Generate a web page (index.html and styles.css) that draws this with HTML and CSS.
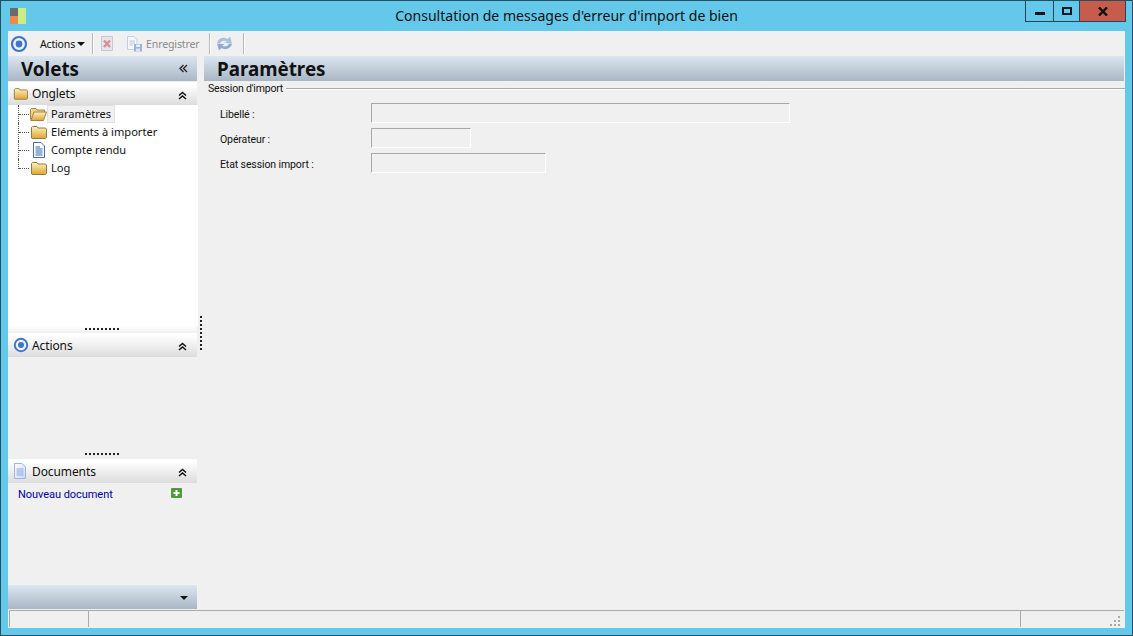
FILE: index.html
```html
<!DOCTYPE html>
<html lang="fr">
<head>
<meta charset="utf-8">
<title>Consultation de messages d'erreur d'import de bien</title>
<link rel="stylesheet" href="styles.css">
</head>
<body>
<svg class="defs" width="0" height="0">
  <defs>
    <linearGradient id="fold" x1="0" y1="0" x2="0" y2="1"><stop offset="0" stop-color="#fdf3c0"/><stop offset="1" stop-color="#e0a52e"/></linearGradient>
    <linearGradient id="page" x1="0" y1="0" x2="1" y2="1"><stop offset="0" stop-color="#ffffff"/><stop offset="1" stop-color="#c9d9f2"/></linearGradient>
    <symbol id="folder" viewBox="0 0 17 14"><path d="M1.500 13V2.500L2.500 1.500H7L8 3H15.500L16.500 4V12.500L15.500 13.500H2Z" fill="url(#fold)" stroke="#8a7a50"/></symbol>
    <symbol id="folder-open" viewBox="0 0 17 14"><path d="M.5 12.500V2.500L1.500 1.500H6L7 3H14.500V5" fill="#f3d27e" stroke="#9a8450"/><path d="M.8 13.500L4 5H16.500L13.500 13.500Z" fill="url(#fold)" stroke="#9a8450"/></symbol>
    <symbol id="doc" viewBox="0 0 14 16"><path d="M1.500.5H9L12.500 4V15.500H1.500Z" fill="#fff" stroke="#4a6aa8"/><path d="M3.500 5H8M3.500 7H10.500M3.500 9H10.500M3.500 11H10.500M3.500 13H10.500" stroke="#2f62b8"/></symbol>
    <symbol id="doc-pale" viewBox="0 0 14 16"><path d="M1.500.5H9L12.500 4V15.500H1.500Z" fill="url(#page)" stroke="#9db5dc"/><path d="M3.500 6H10.500M3.500 8H10.500M3.500 10H10.500M3.500 12H10.500" stroke="#8aa8d8"/></symbol>
    <symbol id="target" viewBox="0 0 18 18"><circle cx="9" cy="9" r="7" fill="#eef3fb" stroke="#3f76c4" stroke-width="2.200"/><circle cx="9" cy="9" r="3.400" fill="#3f76c4"/></symbol>
    <symbol id="chev2" viewBox="0 0 9 9"><path d="M1 4.500L4.500 1.500L8 4.500M1 8L4.500 5L8 8" fill="none" stroke="#111" stroke-width="1.500"/></symbol>
  </defs>
</svg>
<div class="window">
  <header class="titlebar">
    <div class="title-left">
      <svg class="app-icon" width="16" height="16" viewBox="0 0 16 16"><rect x="0" y="0" width="8" height="8" fill="#6b6b6b"/><rect x="0" y="8" width="8" height="8" fill="#f08a4b"/><rect x="8" y="0" width="8" height="16" fill="#c9ee86"/></svg>
    </div>
    <div class="title-text">Consultation de messages d'erreur d'import de bien</div>
    <div class="controls">
      <div class="ctl ctl-min"><span class="min-glyph"></span></div>
      <div class="ctl ctl-max"><span class="max-glyph"></span></div>
      <div class="ctl ctl-close"><svg width="10" height="9" viewBox="0 0 10 9"><path d="M1 .5L9 8.500M9 .5L1 8.500" stroke="#111" stroke-width="2.400"/></svg></div>
    </div>
  </header>
  <div class="client">
    <div class="toolbar">
      <svg class="tb-target" width="18" height="18"><use href="#target"/></svg>
      <span class="tb-actions">Actions</span><span class="caret"></span>
      <span class="sep sep-a"></span>
      <svg class="tb-del" width="14" height="15" viewBox="0 0 14 15"><path d="M1.500.5H12.500V14.500H1.500Z" fill="#e6e4ec" stroke="#c8c8d4"/><path d="M4 4.500L10 11M10 4.500L4 11" stroke="#dd8c94" stroke-width="2.400"/></svg>
      <svg class="tb-save" width="17" height="17" viewBox="0 0 17 17"><path d="M1.500 1.500H8L11 4.500V14.500H1.500Z" fill="#f6f7fb" stroke="#c4cfe2"/><path d="M3.500 6H9M3.500 8H9M3.500 10H7" stroke="#b4c6e2"/><rect x="8" y="9" width="8" height="7.500" fill="#9db2d8"/><rect x="10" y="9.500" width="4" height="2.500" fill="#e6edf8"/><rect x="10" y="13.500" width="4" height="3" fill="#dfe6f2"/></svg>
      <span class="tb-save-label">Enregistrer</span>
      <span class="sep sep-b"></span>
      <svg class="tb-refresh" width="17" height="17" viewBox="0 0 17 17"><path d="M1 8C2.500 3 7.500 1.500 11.500 4L14 1.500L16 8.500L8.500 8L10.800 6.300C8 5 5 6 4 8.500Z" fill="#a9c0de"/><path d="M16 9C14.500 14 9.500 15.500 5.500 13L3 15.500L1 8.700L8.500 9L6.200 10.700C9 12 12 11 13 8.700Z" fill="#8eaad0"/></svg>
      <span class="sep sep-c"></span>
    </div>
    <div class="main">
      <aside class="side">
        <div class="bar-head side-head"><span>Volets</span><svg class="collapse" width="9" height="9" viewBox="0 0 9 9"><path d="M4.500 1L1 4.500L4.500 8M8 1L4.500 4.500L8 8" fill="none" stroke="#222" stroke-width="1.300"/></svg></div>
        <div class="panel-head head-first">
          <svg class="ph-icon" width="15" height="13"><use href="#folder"/></svg><span class="ph-label">Onglets</span>
          <svg class="chev" width="9" height="9"><use href="#chev2"/></svg>
        </div>
        <div class="tree">
          <div class="tree-row"><span class="branch"></span><svg class="ti" width="17" height="14"><use href="#folder-open"/></svg><span class="tl selected">Paramètres</span></div>
          <div class="tree-row"><span class="branch"></span><svg class="ti" width="17" height="14"><use href="#folder"/></svg><span class="tl">Eléments à importer</span></div>
          <div class="tree-row"><span class="branch"></span><svg class="ti ti-doc" width="14" height="16"><use href="#doc"/></svg><span class="tl">Compte rendu</span></div>
          <div class="tree-row last"><span class="branch"></span><svg class="ti" width="17" height="14"><use href="#folder"/></svg><span class="tl">Log</span></div>
        </div>
        <div class="grip grip-a"><span class="grip-dots"></span></div>
        <div class="panel-head">
          <svg class="ph-icon" width="16" height="16"><use href="#target"/></svg><span class="ph-label">Actions</span>
          <svg class="chev" width="9" height="9"><use href="#chev2"/></svg>
        </div>
        <div class="panel-body actions-body"></div>
        <div class="grip grip-b"><span class="grip-dots"></span></div>
        <div class="panel-head">
          <svg class="ph-icon" width="14" height="16"><use href="#doc-pale"/></svg><span class="ph-label">Documents</span>
          <svg class="chev" width="9" height="9"><use href="#chev2"/></svg>
        </div>
        <div class="panel-body docs-body">
          <a class="new-doc">Nouveau document</a>
          <svg class="plus" width="11" height="10" viewBox="0 0 11 10"><rect width="11" height="10" rx="1" fill="#4f9a3c"/><path d="M5.500 2V8M2.500 5H8.500" stroke="#fff" stroke-width="2"/></svg>
        </div>
        <div class="side-foot"><span class="foot-caret"></span></div>
      </aside>
      <div class="splitter"><span class="split-dots"></span></div>
      <main class="content">
        <div class="bar-head content-head"><span>Paramètres</span></div>
        <section class="group">
          <div class="legend"><span class="legend-text">Session d'import</span><span class="legend-line"></span></div>
          <div class="form">
            <label class="flabel">Libellé :</label><span class="input w-lib"></span>
            <label class="flabel">Opérateur :</label><span class="input w-op"></span>
            <label class="flabel">Etat session import :</label><span class="input w-etat"></span>
          </div>
        </section>
      </main>
    </div>
    <footer class="status">
      <span class="cell c1"></span><span class="cell c2"></span>
      <span class="cell c3">
        <svg class="resize" width="12" height="12" viewBox="0 0 12 12" fill="#a8a8a8"><rect x="9" y="1" width="2" height="2"/><rect x="5" y="5" width="2" height="2"/><rect x="9" y="5" width="2" height="2"/><rect x="1" y="9" width="2" height="2"/><rect x="5" y="9" width="2" height="2"/><rect x="9" y="9" width="2" height="2"/></svg>
      </span>
    </footer>
  </div>
</div>
</body>
</html>
```
FILE: styles.css
```css
* { box-sizing: border-box; }
html, body { margin: 0; padding: 0; height: 636px; overflow: hidden; }
body { font-family: "Noto Sans", "Liberation Sans", sans-serif; font-size: 12px; color: #111; }
.defs { display: block; height: 0; }
.window {
  width: 1133px; height: 636px; background: #63c8ea;
  border: 1px solid #24505f; padding: 0 7px 7px 7px;
  display: flex; flex-direction: column;
}
.titlebar { height: 30px; flex: none; display: grid; grid-template-columns: 1fr auto 1fr; }
.title-left { display: flex; align-items: flex-start; padding: 7px 0 0 2px; }
.title-text { font-size: 14.050px; line-height: 29px; color: #111; }
.controls { display: flex; justify-self: end; height: 21px; margin-right: -1px; border: 1px solid #2a4552; border-top: 0; }
.ctl { display: flex; align-items: center; justify-content: center; height: 100%; }
.ctl-min { width: 28px; border-right: 1px solid #2a4552; }
.ctl-max { width: 26px; border-right: 1px solid #2a4552; }
.ctl-close { width: 45px; background: #c75c4c; }
.min-glyph { width: 10px; height: 3px; background: #0c1820; margin-top: 4px; }
.max-glyph { width: 10px; height: 8px; border: 2px solid #0c1820; }
.client { flex: 1; min-height: 0; background: #f0f0f0; display: flex; flex-direction: column; }
.toolbar { height: 25px; flex: none; display: flex; align-items: center; color: #111; font-size: 10.600px; padding-left: 2px; }
.tb-actions { margin-left: 12px; letter-spacing: -.2px; width: 35px; white-space: nowrap; }
.caret { width: 0; height: 0; border: 4px solid transparent; border-top-color: #111; border-bottom: 0; margin-left: 2px; }
.sep { width: 1px; height: 21px; background: #b8b8b8; border-right: 1px solid #fff; box-sizing: content-box; }
.sep-a { margin-left: 7px; }
.tb-del { margin-left: 6px; }
.tb-save { margin-left: 12px; }
.tb-save-label { color: #8a8a8a; margin-left: 3px; width: 53px; white-space: nowrap; letter-spacing: -.15px; }
.sep-b { margin-left: 10px; }
.tb-refresh { margin-left: 5px; }
.sep-c { margin-left: 10px; }
.main { flex: 1; min-height: 0; display: flex; }
.side { width: 190px; flex: none; display: flex; flex-direction: column; }
.bar-head {
  height: 25px; flex: none; display: flex; align-items: center; justify-content: space-between;
  background: linear-gradient(#dce6f1, #a9b6c4);
  font-weight: 700; font-size: 18.800px; color: #111; padding-top: 1px;
}
.side-head { padding-left: 13px; padding-right: 9px; width: 189px; }
.collapse { margin-top: -1px; }
.content-head { padding-left: 13px; margin-right: 1px; }
.panel-head {
  height: 24px; flex: none; display: flex; align-items: center; position: relative;
  background: linear-gradient(#ffffff 10%, #dcdcdc); width: 189px; padding-left: 5px;
}
.head-first { margin-top: 1px; height: 23px; }
.ph-icon { flex: none; }
.ph-label { position: absolute; left: 24px; font-size: 12px; top: 5px; line-height: 16px; letter-spacing: -.1px; }
.head-first .ph-label { top: 4px; }
.chev { position: absolute; right: 10px; top: 9px; }
.tree { height: 221px; flex: none; background: #fff; padding: 0 0 0 10px; width: 190px; }
.tree-row { height: 18px; display: flex; align-items: center; font-size: 11.100px; }
.branch { width: 10px; height: 100%; flex: none; border-left: 1px dotted #555; position: relative; }
.branch::after { content: ""; position: absolute; left: 0; top: 9px; width: 10px; border-top: 1px dotted #555; }
.last .branch { height: 10px; align-self: flex-start; }
.ti { flex: none; margin-left: 2px; }
.ti-doc { margin-left: 4px; margin-right: 1px; }
.tl { padding: 0 3px 1px; line-height: 15px; border: 1px solid transparent; white-space: nowrap; }
.selected { background: #f0f0f0; border-color: #e0e0e0; }
.grip { flex: none; display: flex; justify-content: center; width: 189px; }
.grip-a { height: 7px; background: linear-gradient(#ffffff, #f0f0f0); padding-top: 2px; }
.grip-b { height: 10px; padding-top: 4px; }
.grip-dots { width: 35px; height: 2px; background: repeating-linear-gradient(90deg, #222 0 2px, transparent 2px 4px); }
.panel-body { flex: none; width: 189px; }
.actions-body { height: 92px; }
.docs-body { height: 102px; display: flex; justify-content: space-between; align-items: flex-start; padding: 4px 15px 0 10px; }
.new-doc, .legend, .flabel { font-family: Roboto, "Noto Sans", sans-serif; }
.new-doc { color: #00009c; line-height: 16px; font-size: 11px; letter-spacing: -.05px; }
.plus { margin-top: 1px; }
.side-foot {
  height: 24px; flex: none; width: 189px; display: flex; align-items: center; justify-content: flex-end;
  padding: 1px 9px 0 0; background: linear-gradient(#dce6f1, #a9b6c4);
}
.foot-caret { width: 0; height: 0; border: 4px solid transparent; border-top: 4px solid #111; border-bottom: 0; }
.splitter { width: 6px; flex: none; display: flex; justify-content: center; padding-top: 260px; }
.split-dots { width: 2px; height: 36px; background: repeating-linear-gradient(#222 0 2px, transparent 2px 4px); }
.content { flex: 1; min-width: 0; display: flex; flex-direction: column; }
.group { padding-left: 4px; }
.legend { display: flex; align-items: flex-start; height: 14px; font-size: 10.500px; letter-spacing: -.2px; }
.legend-text { line-height: 14px; padding-top: 1px; }
.legend-line { flex: 1; height: 2px; margin: 7px 0 0 3px; background: #aaa; border-bottom: 1px solid #fff; }
.form { display: grid; grid-template-columns: 151px auto; grid-auto-rows: 20px; row-gap: 5px; padding: 8px 0 0 12px; justify-items: start; align-items: center; }
.flabel { font-size: 10.500px; letter-spacing: -.11px; padding-top: 2px; }
.input { display: block; height: 20px; background: #f0f0f0; border: 1px solid; border-color: #a8a8a8 #fff #fff #a8a8a8; }
.w-lib { width: 419px; }
.w-op { width: 100px; }
.w-etat { width: 175px; }
.status { height: 18px; flex: none; display: flex; margin: 1px 1px 0 1px; border-top: 1px solid #aaa; background: #f0f0f0; }
.cell { height: 16px; display: block; border-right: 1px solid #aaa; }
.c1 { width: 80px; border-left: 1px solid #aaa; }
.c2 { width: 932px; }
.c3 { flex: 1; border-right: 0; display: flex; justify-content: flex-end; align-items: flex-end; padding-right: 3px; }
```
